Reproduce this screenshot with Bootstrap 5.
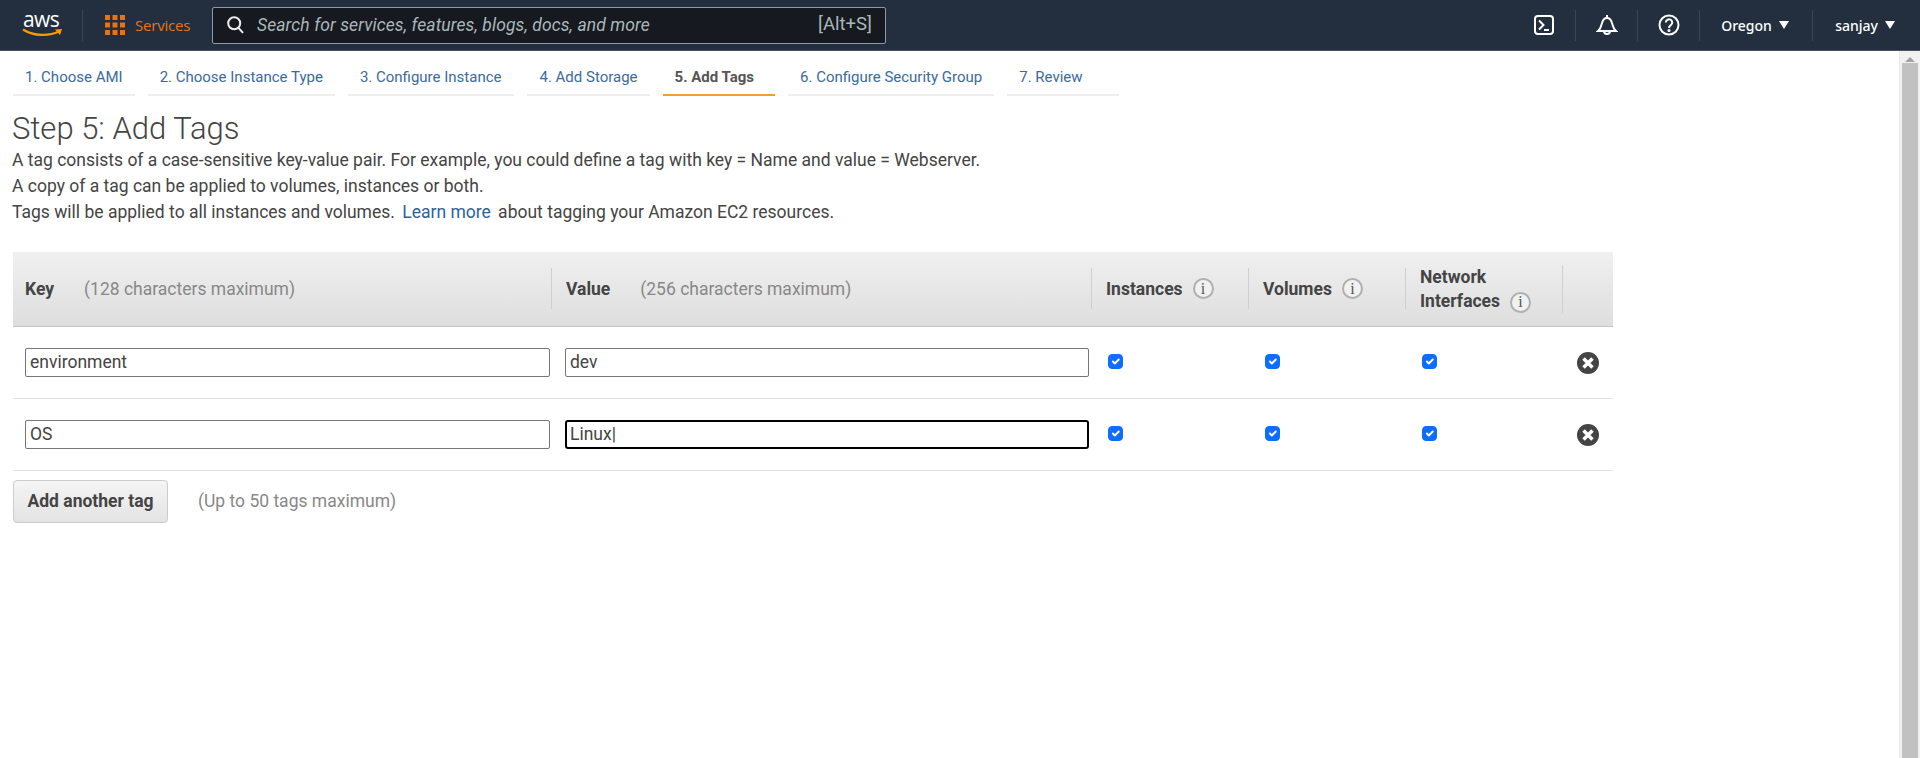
<!DOCTYPE html>
<html lang="en">
<head>
<meta charset="utf-8">
<title>Step 5: Add Tags</title>
<link href="https://cdn.jsdelivr.net/npm/bootstrap@5.3.0/dist/css/bootstrap.min.css" rel="stylesheet">
<style>
html,body{height:100%;overflow:hidden}
body{font-family:Roboto,"Liberation Sans",sans-serif;color:#444;background:#fff}
.topbar{height:51px;background:#232f3e;border-bottom:1px solid #4a5462;color:#fff;font-family:"Noto Sans","Open Sans",sans-serif}
.logo-box{width:83px;height:31px;padding-left:22px;border-right:1px solid #3a4553}
.logo-box svg{display:block}
.aws-word{font:500 21px/18px "Open Sans",sans-serif;letter-spacing:-.6px;color:#fff;display:block;margin-left:1px}
.grid-ic{margin-left:22px}
.svc{color:#ec7211;font-size:15px;margin-left:10px;width:77px;font-family:"Open Sans",sans-serif;letter-spacing:-.2px}
.searchbox{width:674px;height:37px;background:#16191f;border:1px solid #8d99a8;border-radius:2px;padding:0 13px 0 14px;color:#aab7b8;font-family:Roboto,sans-serif}
.searchbox em{font-size:17.5px;margin-left:13px;letter-spacing:.1px}
.searchbox span{font-size:18.5px}
.hdr-right{padding-right:25px}
.hdr-ic{width:62px;height:31px;border-right:1px solid #3a4553}
.hdr-ic.wide{width:63px}
.hdr-menu{height:31px;font-size:14px;font-weight:500}
.hdr-menu.m1{width:113px;padding-left:21px;border-right:1px solid #3a4553}
.hdr-menu.m2{padding-left:22px}
.caret-tri{width:0;height:0;border-left:5px solid transparent;border-right:5px solid transparent;border-top:8px solid #fff;margin-left:7px;display:block}
.content-wrap{height:707px}
.mainarea{flex:1 1 auto;min-width:0}
.fake-scroll{width:21px;flex:0 0 21px;background:#f1f1f1;padding:0 2px;border-left:1px solid #e9e9e9}
.scroll-arrow{height:12px;padding-top:6px}
.scroll-arrow i{display:block;width:0;height:0;margin:0 auto;border-left:5px solid transparent;border-right:5px solid transparent;border-bottom:5px solid #a3a3a3}
.scroll-thumb{height:695px;background:#c1c1c1}
.wizard-tabs{padding:16px 0 0 13px;gap:13px}
.wiz-tab{display:block;padding:0 12px;height:29px;line-height:20px;font-size:15px;color:#3b6a9e;text-decoration:none;border-bottom:2px solid #eee}
.wiz-tab.third{padding-right:13px}
.wiz-tab.on{color:#555;font-weight:700;border-bottom-color:#f19d34;padding-right:21px}
.wiz-tab.last{padding-right:36px}
.page-h{font-size:31px;font-weight:300;line-height:36px;color:#444;margin:15px 0 0 12px}
.intro{margin:0 0 0 12px;font-size:17.5px;line-height:26px;color:#444}
.intro a{color:#2e6299;text-decoration:none;margin:0 3px}
.tag-table{width:1600px;margin:27px 0 0 13px;table-layout:fixed;border-collapse:collapse}
.tag-table th{height:74px;padding:0 0 0 14px;background:linear-gradient(#f0f0f0,#dedede);border-bottom:1px solid #c6c6c6;font-size:17.5px;font-weight:700;line-height:24px;color:#444;vertical-align:middle}
.th-in{min-height:41px;border-right:1px solid #cfcfcf}
.tag-table th:first-child{padding-left:12px}
.tag-table th .hint{font-weight:400;color:#888;margin-left:30px}
.tag-table td{height:72px;padding:0 0 0 13px;border-bottom:1px solid #e1e1e1;vertical-align:middle}
.tag-table td:first-child{padding-left:12px}
.tag-in{display:block;height:29px;border:1px solid #767676;border-radius:2px;font-size:17.5px;color:#444;padding:0 4px;background:#fff;outline:0;font-family:Roboto,sans-serif}
.in-key{width:525px}
.in-val{width:524px}
.tag-in.focused{border:2px solid #000;border-radius:3px;padding:0 3px}
.tag-check{width:15px;height:15px;margin:0 0 1px 3px;display:block;border-radius:3px}
.info-i{display:inline-flex;width:21px;height:21px;border:2px solid #b0b0b0;border-radius:50%;align-items:center;justify-content:center;font:400 16px/1 "Liberation Serif",serif;color:#555;margin-left:10px;vertical-align:middle;background:#f1f1f1}
.rm-x{display:block;margin:1px 0 0 1px}
.add-row{padding:9px 0 0 13px}
.add-tag-btn{height:43px;width:155px;background:linear-gradient(#f5f5f5,#e3e3e3);border:1px solid #ccc;border-radius:4px;font-size:17.5px;font-weight:700;color:#444;padding:0}
.add-row span{margin-left:30px;font-size:17.5px;color:#888}
</style>
</head>
<body>
<header class="topbar d-flex align-items-center">
  <div class="logo-box flex-shrink-0">
    <span class="aws-word">aws</span>
    <svg width="42" height="10" viewBox="0 0 42 10"><path d="M1 1.5C12 8.5 27 8.5 38 3" fill="none" stroke="#f90" stroke-width="2.2"/><path d="M33 1.5l7-.5-2 6z" fill="#f90"/></svg>
  </div>
  <svg class="grid-ic flex-shrink-0" width="20" height="20" viewBox="0 0 20 20" fill="#ec7211"><rect width="5" height="5"/><rect x="7.5" width="5" height="5"/><rect x="15" width="5" height="5"/><rect y="7.5" width="5" height="5"/><rect x="7.5" y="7.5" width="5" height="5"/><rect x="15" y="7.5" width="5" height="5"/><rect y="15" width="5" height="5"/><rect x="7.5" y="15" width="5" height="5"/><rect x="15" y="15" width="5" height="5"/></svg>
  <div class="svc flex-shrink-0">Services</div>
  <div class="searchbox d-flex align-items-center flex-shrink-0">
    <svg width="17" height="18" viewBox="0 0 17 18" fill="none" stroke="#eee" stroke-width="2"><circle cx="7.2" cy="7.2" r="6"/><path d="M11.5 11.8l4.5 5"/></svg>
    <em>Search for services, features, blogs, docs, and more</em>
    <span class="ms-auto">[Alt+S]</span>
  </div>
  <div class="hdr-right d-flex align-items-center ms-auto">
    <div class="hdr-ic wide d-flex align-items-center justify-content-center"><svg width="22" height="22" viewBox="0 0 22 22" fill="none" stroke="#fff" stroke-width="2"><rect x="2" y="2" width="18" height="18" rx="3"/><path d="M6 6.5l4.5 4.5L6 15.5M11 16h5"/></svg></div>
    <div class="hdr-ic d-flex align-items-center justify-content-center"><svg width="22" height="22" viewBox="0 0 22 22" fill="none" stroke="#fff" stroke-width="2"><path d="M11 1v3"/><path d="M2 17c3-2 3-5 4-8 .8-3 2.500-5 5-5s4.200 2 5 5c1 3 1 6 4 8z"/><path d="M8 17a3 3 0 0 0 6 0"/></svg></div>
    <div class="hdr-ic d-flex align-items-center justify-content-center"><svg width="22" height="22" viewBox="0 0 22 22" fill="none" stroke="#fff" stroke-width="2"><circle cx="11" cy="11" r="9.500"/><path d="M7.800 8.500a3.200 3.200 0 1 1 5 2.700c-1.200.8-1.800 1.300-1.800 2.800"/><circle cx="11" cy="16.500" r=".6" fill="#fff"/></svg></div>
    <div class="hdr-menu m1 d-flex align-items-center">Oregon<i class="caret-tri"></i></div>
    <div class="hdr-menu m2 d-flex align-items-center">sanjay<i class="caret-tri"></i></div>
  </div>
</header>
<div class="content-wrap d-flex">
  <main class="mainarea">
    <nav class="wizard-tabs d-flex">
      <a class="wiz-tab" href="#">1. Choose AMI</a>
      <a class="wiz-tab" href="#">2. Choose Instance Type</a>
      <a class="wiz-tab third" href="#">3. Configure Instance</a>
      <a class="wiz-tab" href="#">4. Add Storage</a>
      <a class="wiz-tab on" href="#">5. Add Tags</a>
      <a class="wiz-tab" href="#">6. Configure Security Group</a>
      <a class="wiz-tab last" href="#">7. Review</a>
    </nav>
    <h1 class="page-h">Step 5: Add Tags</h1>
    <p class="intro">A tag consists of a case-sensitive key-value pair. For example, you could define a tag with key = Name and value = Webserver.<br>A copy of a tag can be applied to volumes, instances or both.<br>Tags will be applied to all instances and volumes. <a href="#">Learn more</a> about tagging your Amazon EC2 resources.</p>
    <table class="tag-table">
      <colgroup><col style="width:539px"><col style="width:540px"><col style="width:157px"><col style="width:157px"><col style="width:157px"><col style="width:50px"></colgroup>
      <thead><tr>
        <th><div class="th-in d-flex align-items-center">Key<span class="hint">(128 characters maximum)</span></div></th>
        <th><div class="th-in d-flex align-items-center">Value<span class="hint">(256 characters maximum)</span></div></th>
        <th><div class="th-in d-flex align-items-center">Instances<span class="info-i">i</span></div></th>
        <th><div class="th-in d-flex align-items-center">Volumes<span class="info-i">i</span></div></th>
        <th><div class="th-in">Network<br>Interfaces<span class="info-i">i</span></div></th>
        <th></th>
      </tr></thead>
      <tbody>
        <tr>
          <td><input class="tag-in in-key" value="environment" aria-label="Key"></td>
          <td><input class="tag-in in-val" value="dev" aria-label="Value"></td>
          <td><input class="form-check-input tag-check" type="checkbox" checked aria-label="Instances"></td>
          <td><input class="form-check-input tag-check" type="checkbox" checked aria-label="Volumes"></td>
          <td><input class="form-check-input tag-check" type="checkbox" checked aria-label="Network Interfaces"></td>
          <td><svg class="rm-x" width="22" height="22" viewBox="0 0 22 22"><circle cx="11" cy="11" r="11" fill="#444"/><path d="M6.500 6.500l9 9M15.500 6.500l-9 9" stroke="#fff" stroke-width="3.500"/></svg></td>
        </tr>
        <tr>
          <td><input class="tag-in in-key" value="OS" aria-label="Key"></td>
          <td><input class="tag-in in-val focused" value="Linux|" aria-label="Value"></td>
          <td><input class="form-check-input tag-check" type="checkbox" checked aria-label="Instances"></td>
          <td><input class="form-check-input tag-check" type="checkbox" checked aria-label="Volumes"></td>
          <td><input class="form-check-input tag-check" type="checkbox" checked aria-label="Network Interfaces"></td>
          <td><svg class="rm-x" width="22" height="22" viewBox="0 0 22 22"><circle cx="11" cy="11" r="11" fill="#444"/><path d="M6.500 6.500l9 9M15.500 6.500l-9 9" stroke="#fff" stroke-width="3.500"/></svg></td>
        </tr>
      </tbody>
    </table>
    <div class="add-row d-flex align-items-center">
      <button class="btn add-tag-btn" type="button">Add another tag</button>
      <span>(Up to 50 tags maximum)</span>
    </div>
  </main>
  <div class="fake-scroll">
    <div class="scroll-arrow"><i></i></div>
    <div class="scroll-thumb"></div>
  </div>
</div>
</body>
</html>
